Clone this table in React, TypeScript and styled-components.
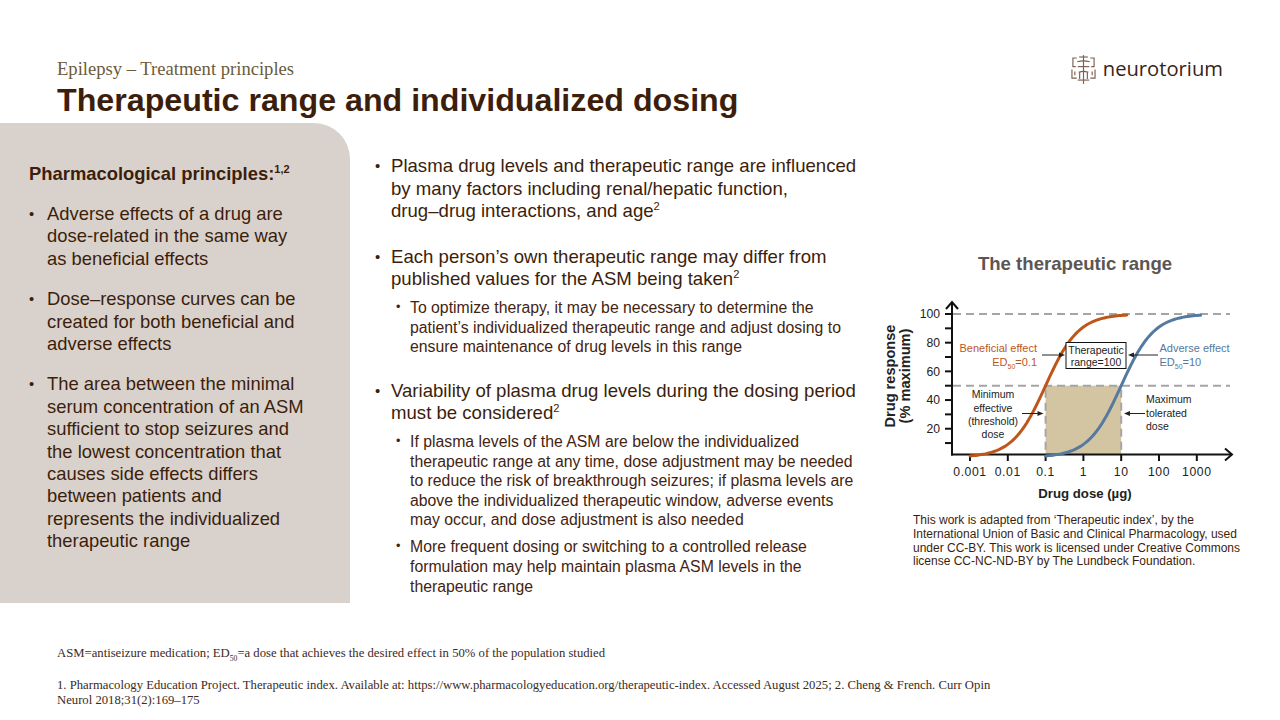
import React from "react";
import styled, { createGlobalStyle } from "styled-components";

const INK = "#3c1e0b";
const ORANGE = "#bd561a";
const BLUE = "#55799f";

const Global = createGlobalStyle`
  html, body { margin: 0; padding: 0; background: #ffffff; }
  body { font-family: "Liberation Sans", Arial, sans-serif; color: ${INK}; }
  * { box-sizing: border-box; }
`;

const Slide = styled.div`
  width: 1280px;
  height: 720px;
  overflow: hidden;
  background: #fff;
  display: flex;
  flex-direction: column;
`;

const Header = styled.header`
  display: flex;
  justify-content: space-between;
  align-items: flex-start;
  padding: 58px 57px 0 57px;
  height: 123px;
`;

const Titles = styled.div`
  display: flex;
  flex-direction: column;
`;

const Kicker = styled.div`
  font-family: "Liberation Serif", "Times New Roman", serif;
  font-size: 18.6px;
  line-height: 22px;
  color: #6b5b3c;
`;

const Title = styled.h1`
  margin: 1px 0 0 0;
  font-family: "Liberation Sans", Arial, sans-serif;
  font-weight: 700;
  font-size: 32.2px;
  line-height: 38px;
  color: ${INK};
`;

const Logo = styled.div`
  display: flex;
  align-items: center;
  gap: 7px;
  margin-top: -4px;
`;

const LogoWord = styled.span`
  font-family: "Open Sans", "Liberation Sans", sans-serif;
  font-size: 20.2px;
  line-height: 24px;
  margin-top: -3px;
  color: #3a2418;
`;

const Main = styled.main`
  display: flex;
  height: 480px;
`;

const Panel = styled.section`
  width: 350px;
  flex: none;
  background: #d9d2cc;
  border-top-right-radius: 36px;
  padding: 40px 42px 0 29px;
`;

const PanelHeading = styled.h2`
  margin: 0 0 18px 0;
  font-size: 18.4px;
  line-height: 22px;
  font-weight: 700;
  color: ${INK};
  white-space: nowrap;
`;

const Sup = styled.sup`
  font-size: 60%;
  line-height: 0;
  vertical-align: 0.6em;
`;

const NoWrap = styled.span`
  white-space: nowrap;
`;

const List = styled.ul<{ $gap: number; $indent?: number }>`
  list-style: none;
  margin: 0;
  padding: 0 0 0 ${(p) => p.$indent ?? 0}px;
  display: flex;
  flex-direction: column;
  gap: ${(p) => p.$gap}px;
`;

const Item = styled.li<{ $size: number; $lh: number; $dot: number; $color?: string }>`
  display: grid;
  grid-template-columns: ${(p) => p.$dot}px 1fr;
  font-size: ${(p) => p.$size}px;
  line-height: ${(p) => p.$lh}px;
  color: ${(p) => p.$color ?? INK};
`;

const Dot = styled.span`
  font-size: 0.8em;
`;

const Body = styled.div`
  display: flex;
  flex-direction: column;
`;

const Middle = styled.section`
  width: 512px;
  flex: none;
  padding: 32px 0 0 25px;
`;

const SubWrap = styled.div`
  margin-top: 7px;
`;

const Right = styled.section`
  flex: 1;
  display: flex;
  flex-direction: column;
  padding-top: 130px;
  padding-left: 18px;
`;

const ChartTitle = styled.h3`
  margin: 0 0 15px 0;
  width: 390px;
  text-align: center;
  font-size: 18.6px;
  line-height: 22px;
  font-weight: 700;
  color: #5b5653;
`;

const ChartSvg = styled.svg`
  display: block;
  width: 360px;
  height: 215px;
`;

const Caption = styled.p`
  margin: 9px 0 0 33px;
  font-size: 12px;
  line-height: 13.8px;
  color: ${INK};
  width: 345px;
`;

const Footer = styled.footer`
  padding: 43px 0 0 57px;
  font-family: "Liberation Serif", "Times New Roman", serif;
  font-size: 12.7px;
  color: #3c2a1c;
`;

const FootLine = styled.div<{ $mt?: number }>`
  margin-top: ${(p) => p.$mt ?? 0}px;
  line-height: 15px;
  white-space: nowrap;
`;

const Sub = styled.sub`
  font-size: 60%;
  line-height: 0;
`;

function LogoMark() {
  return (
    <svg width="25" height="31" viewBox="0 0 26 32" fill="none" stroke="#7d6050" strokeWidth="1.2">
      <path d="M13 1 V31" />
      <path d="M8.5 3 H17.5" />
      <path d="M6.5 8 Q13 6 19.5 8" />
      <path d="M6 4 H2 V13 H5" />
      <path d="M20 4 H24 V13 H21" />
      <path d="M7 13 H19" />
      <path d="M1 16 V25 H6" />
      <path d="M25 16 V25 H20" />
      <path d="M4 18 V22" />
      <path d="M22 18 V22" />
      <path d="M8 19 Q13 17 18 19" />
      <path d="M9 19 V26" />
      <path d="M17 19 V26" />
      <path d="M7 27 H19" />
    </svg>
  );
}

const Xf = (L: number) => 203.4 + 37.8 * L;
const Yf = (v: number) => 167.4 - 1.434 * v;

function curvePath(edLog: number, L0: number, L1: number) {
  const pts: string[] = [];
  for (let L = L0; L <= L1 + 1e-6; L += 0.05) {
    const v = 100 / (1 + Math.pow(10, -(L - edLog)));
    pts.push(`${Xf(L).toFixed(2)},${Yf(v).toFixed(2)}`);
  }
  return "M" + pts.join(" L");
}

function Arrow({ x1, x2, y }: { x1: number; x2: number; y: number }) {
  const dir = x2 > x1 ? 1 : -1;
  return (
    <g>
      <line x1={x1} y1={y} x2={x2 - dir * 3} y2={y} stroke="#222" strokeWidth="1" />
      <path d={`M${x2} ${y} L${x2 - dir * 6} ${y - 2.6} L${x2 - dir * 6} ${y + 2.6} Z`} fill="#222" />
    </g>
  );
}

function Chart() {
  const yTicks = [10, 20, 30, 40, 50, 60, 70, 80, 90, 100];
  const yLabels = [100, 80, 60, 40, 20];
  const xLabels = ["0.001", "0.01", "0.1", "1", "10", "100", "1000"];
  const lbl = { fontFamily: "'Liberation Sans', Arial, sans-serif" };
  return (
    <ChartSvg viewBox="0 0 360 215">
      <rect x={Xf(-1)} y={Yf(50)} width={Xf(1) - Xf(-1)} height={164.5 - Yf(50)} fill="#d3c5a1" />
      <g stroke="#a5a5a5" strokeWidth="2" strokeDasharray="8 5" fill="none">
        <line x1={73} y1={Yf(100)} x2={350} y2={Yf(100)} />
        <line x1={73} y1={Yf(50)} x2={350} y2={Yf(50)} />
        <line x1={Xf(-1)} y1={Yf(50) + 4} x2={Xf(-1)} y2={164} />
        <line x1={Xf(1)} y1={Yf(50) + 4} x2={Xf(1)} y2={164} />
      </g>
      <g stroke="#111" strokeWidth="2" fill="none">
        <line x1={72} y1={12} x2={72} y2={165.5} />
        <line x1={71} y1={164.5} x2={351} y2={164.5} />
        <path d="M66 19 L72 12 L78 19" />
        <path d="M345 158.5 L352 164.5 L345 170.5" />
        {yTicks.map((v) => (
          <line key={v} x1={65} y1={Yf(v)} x2={72} y2={Yf(v)} />
        ))}
        {xLabels.map((_, i) => (
          <line key={i} x1={Xf(i - 3)} y1={164.5} x2={Xf(i - 3)} y2={171} />
        ))}
      </g>
      <path d={curvePath(-1, -3, 1.15)} stroke={ORANGE} strokeWidth="3" fill="none" strokeLinecap="round" />
      <path d={curvePath(1, -1, 3.14)} stroke={BLUE} strokeWidth="3" fill="none" strokeLinecap="round" />
      <g style={lbl} fontSize="12.2" fill="#222">
        {yLabels.map((v) => (
          <text key={v} x={60} y={Yf(v) + 4.3} textAnchor="end">
            {v}
          </text>
        ))}
        {xLabels.map((t, i) => (
          <text key={t} x={Xf(i - 3)} y={186} textAnchor="middle" letterSpacing="0.6">
            {t}
          </text>
        ))}
        <text x={205} y={207.5} textAnchor="middle" fontWeight="700" fontSize="13.2">
          Drug dose (µg)
        </text>
        <text transform="translate(15 86) rotate(-90)" textAnchor="middle" fontWeight="700" fontSize="14.6">
          Drug response
        </text>
        <text transform="translate(30 86) rotate(-90)" textAnchor="middle" fontWeight="700" fontSize="14.6">
          (% maximum)
        </text>
      </g>
      <g style={lbl} fontSize="11">
        <text x={157} y={62} textAnchor="end" fill={ORANGE}>
          Beneficial effect
        </text>
        <text x={157} y={76} textAnchor="end" fill={ORANGE}>
          ED<tspan fontSize="7" dy="2.5">50</tspan>
          <tspan dy="-2.5">=0.1</tspan>
        </text>
        <text x={279.5} y={62} fill={BLUE}>
          Adverse effect
        </text>
        <text x={279.5} y={76} fill={BLUE}>
          ED<tspan fontSize="7" dy="2.5">50</tspan>
          <tspan dy="-2.5">=10</tspan>
        </text>
      </g>
      <Arrow x1={162} x2={185} y={65} />
      <Arrow x1={278} x2={248} y={65} />
      <rect x={186} y={52.5} width={60} height={26} fill="#fff" stroke="#111" strokeWidth="1" />
      <g style={lbl} fontSize="10.5" fill="#222" textAnchor="middle">
        <text x={216} y={63.5}>Therapeutic</text>
        <text x={216} y={75.5}>range=100</text>
        <text x={113} y={108}>Minimum</text>
        <text x={113} y={121.5}>effective</text>
        <text x={113} y={135}>(threshold)</text>
        <text x={113} y={147.5}>dose</text>
      </g>
      <g style={lbl} fontSize="10.5" fill="#222">
        <text x={266} y={113}>Maximum</text>
        <text x={266} y={126.5}>tolerated</text>
        <text x={266} y={139.5}>dose</text>
      </g>
      <Arrow x1={142} x2={163.5} y={123.5} />
      <Arrow x1={265} x2={244} y={123.5} />
    </ChartSvg>
  );
}

type Bullet = { text: React.ReactNode; subs?: React.ReactNode[] };

const leftBullets: React.ReactNode[] = [
  <>
    Adverse effects of a drug are <NoWrap>dose-related</NoWrap> in the same way as beneficial effects
  </>,
  "Dose–response curves can be created for both beneficial and adverse effects",
  "The area between the minimal serum concentration of an ASM sufficient to stop seizures and the lowest concentration that causes side effects differs between patients and represents the individualized therapeutic range",
];

const midBullets: Bullet[] = [
  {
    text: (
      <>
        Plasma drug levels and therapeutic range are influenced by many factors including renal/hepatic function,{" "}
        <NoWrap>drug–drug</NoWrap> interactions, and age<Sup>2</Sup>
      </>
    ),
  },
  {
    text: (
      <>
        Each person’s own therapeutic range may differ from published values for the ASM being taken<Sup>2</Sup>
      </>
    ),
    subs: [
      "To optimize therapy, it may be necessary to determine the patient’s individualized therapeutic range and adjust dosing to ensure maintenance of drug levels in this range",
    ],
  },
  {
    text: (
      <>
        Variability of plasma drug levels during the dosing period must be considered<Sup>2</Sup>
      </>
    ),
    subs: [
      "If plasma levels of the ASM are below the individualized therapeutic range at any time, dose adjustment may be needed to reduce the risk of breakthrough seizures; if plasma levels are above the individualized therapeutic window, adverse events may occur, and dose adjustment is also needed",
      "More frequent dosing or switching to a controlled release formulation may help maintain plasma ASM levels in the therapeutic range",
    ],
  },
];

export default function App() {
  return (
    <>
      <Global />
      <Slide>
        <Header>
          <Titles>
            <Kicker>Epilepsy – Treatment principles</Kicker>
            <Title>Therapeutic range and individualized dosing</Title>
          </Titles>
          <Logo>
            <LogoMark />
            <LogoWord>neurotorium</LogoWord>
          </Logo>
        </Header>
        <Main>
          <Panel>
            <PanelHeading>
              Pharmacological principles:<Sup>1,2</Sup>
            </PanelHeading>
            <List $gap={18}>
              {leftBullets.map((b, i) => (
                <Item key={i} $size={18.4} $lh={22.4} $dot={18}>
                  <Dot>•</Dot>
                  <span>{b}</span>
                </Item>
              ))}
            </List>
          </Panel>
          <Middle>
            <List $gap={23}>
              {midBullets.map((b, i) => (
                <Item key={i} $size={18.6} $lh={22.6} $dot={16}>
                  <Dot>•</Dot>
                  <Body>
                    <span>{b.text}</span>
                    {b.subs && (
                      <SubWrap>
                        <List $gap={7.5} $indent={5}>
                          {b.subs.map((s, j) => (
                            <Item key={j} $size={15.8} $lh={19.6} $dot={14} $color="#432411">
                              <Dot>•</Dot>
                              <span>{s}</span>
                            </Item>
                          ))}
                        </List>
                      </SubWrap>
                    )}
                  </Body>
                </Item>
              ))}
            </List>
          </Middle>
          <Right>
            <ChartTitle>The therapeutic range</ChartTitle>
            <Chart />
            <Caption>
              This work is adapted from ‘Therapeutic index’, by the International Union of Basic and Clinical
              Pharmacology, used under CC-BY. This work is licensed under Creative Commons license CC-NC-ND-BY by The
              Lundbeck Foundation.
            </Caption>
          </Right>
        </Main>
        <Footer>
          <FootLine>
            ASM=antiseizure medication; ED<Sub>50</Sub>=a dose that achieves the desired effect in 50% of the population
            studied
          </FootLine>
          <FootLine $mt={17}>
            1. Pharmacology Education Project. Therapeutic index. Available at:
            https://www.pharmacologyeducation.org/therapeutic-index. Accessed August 2025; 2. Cheng &amp; French. Curr
            Opin
          </FootLine>
          <FootLine>Neurol 2018;31(2):169–175</FootLine>
        </Footer>
      </Slide>
    </>
  );
}
